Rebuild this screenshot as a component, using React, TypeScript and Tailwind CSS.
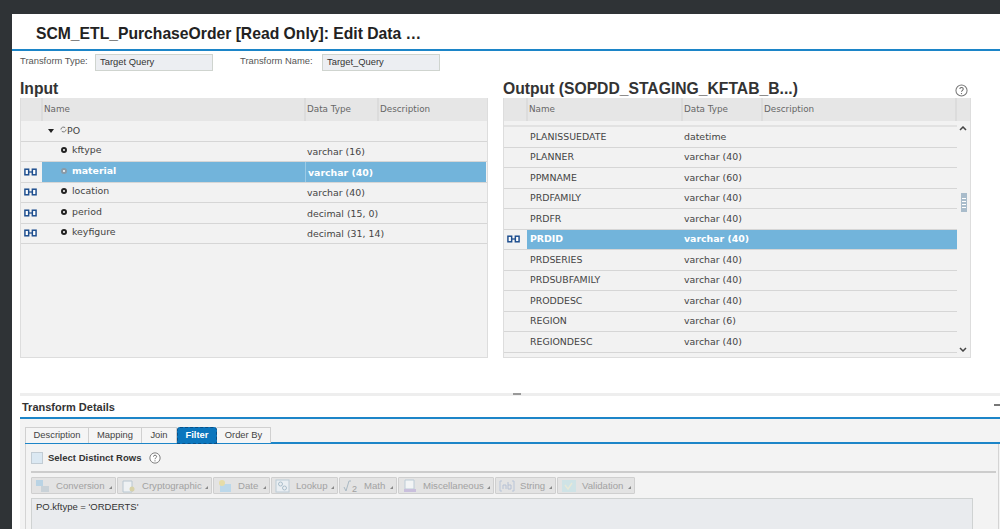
import React from "react";

const sans = "font-['Liberation_Sans',Arial,sans-serif]";
const verdana = "font-['DejaVu_Sans',Verdana,sans-serif]";

function LinkIcon() {
  return (
    <svg width="13" height="8" viewBox="0 0 14 8" className="block">
      <rect x="1" y="1" width="4" height="6" fill="#fff" stroke="#1f4f8f" strokeWidth="1.6" />
      <rect x="9" y="1" width="4" height="6" fill="#fff" stroke="#1f4f8f" strokeWidth="1.6" />
      <path d="M5 4h4" stroke="#1f4f8f" strokeWidth="1.4" />
    </svg>
  );
}

function Help({ size = 13 }: { size?: number }) {
  return (
    <svg width={size} height={size} viewBox="0 0 14 14" className="block">
      <circle cx="7" cy="7" r="6" fill="#fff" stroke="#777" strokeWidth="1.1" />
      <path d="M5.2 5.4c0-2.3 3.7-2.3 3.7 0 0 1.4-1.9 1.4-1.9 3" fill="none" stroke="#666" strokeWidth="1.1" />
      <circle cx="7" cy="10.3" r=".7" fill="#666" />
    </svg>
  );
}

function Bullet({ dim }: { dim?: boolean }) {
  return <span className={`block w-[6px] h-[6px] rounded-full border-2 bg-white ${dim ? "border-[#8a9aa6]" : "border-[#222]"}`} />;
}

function Header({ c1, c2, c3, c4, last }: { c1: number; c2: number; c3: number; c4: number; last?: boolean }) {
  const cell = "h-full flex items-center border-r-2 border-[#dcdcdc] pl-[1px]";
  return (
    <div className={`flex h-[23px] bg-[#e6e6e6] text-[8.8px] text-[#666] ${verdana}`}>
      <div className="h-full border-r-2 border-[#dcdcdc]" style={{ width: c1 }} />
      <div className={cell} style={{ width: c2 }}>Name</div>
      <div className={cell} style={{ width: c3 }}>Data Type</div>
      <div className={last ? cell : "h-full flex items-center pl-[1px]"} style={{ width: c4 }}>Description</div>
      {last && <div className="flex-1" />}
    </div>
  );
}

const inputRows = [
  { n: "kftype", t: "varchar (16)", link: false },
  { n: "material", t: "varchar (40)", link: true, sel: true },
  { n: "location", t: "varchar (40)", link: true },
  { n: "period", t: "decimal (15, 0)", link: true },
  { n: "keyfigure", t: "decimal (31, 14)", link: true },
];

const outputRows = [
  ["PLANISSUEDATE", "datetime"],
  ["PLANNER", "varchar (40)"],
  ["PPMNAME", "varchar (60)"],
  ["PRDFAMILY", "varchar (40)"],
  ["PRDFR", "varchar (40)"],
  ["PRDID", "varchar (40)"],
  ["PRDSERIES", "varchar (40)"],
  ["PRDSUBFAMILY", "varchar (40)"],
  ["PRODDESC", "varchar (40)"],
  ["REGION", "varchar (6)"],
  ["REGIONDESC", "varchar (40)"],
];

function InputTable() {
  return (
    <div className={`h-[260px] bg-[#f2f2f2] border-x border-b border-[#dddddd] ${verdana} text-[9.4px] text-[#444]`}>
      <Header c1={22} c2={263} c3={73} c4={107} />
      <div className="flex items-center h-[20.5px] border-b border-[#d6d6d6] pl-[27px] text-[#444]">
        <span className="w-0 h-0 border-x-[3px] border-x-transparent border-t-[4px] border-t-[#222] ml-0 mr-[6px]" />
        <svg width="7" height="7" viewBox="0 0 8 8" className="-mt-[3px]">
          <path d="M1 4a3 3 0 0 1 5-2M7 4a3 3 0 0 1-5 2" fill="none" stroke="#666" strokeWidth="1" />
        </svg>
        <span>PO</span>
      </div>
      {inputRows.map((r) => (
        <div key={r.n} className="flex h-[20.5px] border-b border-[#d6d6d6] pr-[1px]">
          <div className="w-[21px] flex items-center pl-[3px]">{r.link && <LinkIcon />}</div>
          <div className={`flex flex-1 ${r.sel ? "bg-[#72b4db] text-white font-bold" : ""}`}>
            <div className="w-[263px] flex items-center pl-[19px] gap-[5px] pb-[2px]">
              <Bullet dim={r.sel} />
              <span>{r.n}</span>
            </div>
            <div className={`flex-1 flex items-center pl-[2px] pt-[2px] ${r.sel ? "border-l border-[#9ccbe6]" : ""}`}>{r.t}</div>
          </div>
        </div>
      ))}
    </div>
  );
}

function OutputTable() {
  return (
    <div className={`relative h-[260px] bg-[#f2f2f2] border-x border-b border-[#dddddd] ${verdana} text-[9.4px] text-[#444]`}>
      <Header c1={24} c2={155} c3={80} c4={194} last />
      <div className="w-[453px] pt-[4px]">
        <div className="border-t-2 border-[#e2e2e2]" />
        {outputRows.map(([n, t]) => {
          const sel = n === "PRDID";
          return (
            <div key={n} className="flex h-[20.5px] border-b border-[#d6d6d6]">
              <div className="w-[23px] flex items-center pl-[3px]">{sel && <LinkIcon />}</div>
              <div className={`flex flex-1 items-center ${sel ? "bg-[#72b4db] text-white font-bold" : ""}`}>
                <div className="w-[157px] pl-[3px]">{n}</div>
                <div>{t}</div>
              </div>
            </div>
          );
        })}
      </div>
      <svg width="8" height="5" viewBox="0 0 8 5" className="absolute right-[3px] top-[28px]">
        <path d="M1 4l3-3 3 3" fill="none" stroke="#444" strokeWidth="1.5" />
      </svg>
      <div className="absolute right-[3px] top-[95px] w-[6px] h-[19px] bg-[#a9bccb] flex flex-col items-center justify-center gap-[2px]">
        <span className="block w-[4px] h-[1px] bg-white" />
        <span className="block w-[4px] h-[1px] bg-white" />
        <span className="block w-[4px] h-[1px] bg-white" />
        <span className="block w-[4px] h-[1px] bg-white" />
      </div>
      <svg width="8" height="5" viewBox="0 0 8 5" className="absolute right-[3px] top-[249px]">
        <path d="M1 1l3 3 3-3" fill="none" stroke="#444" strokeWidth="1.5" />
      </svg>
    </div>
  );
}

const toolIcons: Record<string, React.ReactNode> = {
  Conversion: (
    <svg width="16" height="14" viewBox="0 0 16 14">
      <rect x="1" y="1" width="7" height="6" fill="#b9d3e4" />
      <rect x="6" y="7" width="8" height="6" fill="#c9d2d8" />
    </svg>
  ),
  Cryptographic: (
    <svg width="16" height="14" viewBox="0 0 16 14">
      <path d="M2 2h9v11H2z" fill="#eef1f3" stroke="#b8c6d0" />
      <circle cx="11" cy="10" r="2.5" fill="#d8d2a8" />
    </svg>
  ),
  Date: (
    <svg width="16" height="14" viewBox="0 0 16 14">
      <path d="M3 5h11v8H3z" fill="#bcd8ea" />
      <circle cx="5" cy="4" r="3" fill="#e6dca8" />
    </svg>
  ),
  Lookup: (
    <svg width="16" height="14" viewBox="0 0 16 14">
      <rect x="1" y="1" width="13" height="12" fill="#e9eef2" stroke="#bccbd6" />
      <circle cx="5.5" cy="5" r="2" fill="none" stroke="#a9bdca" />
      <circle cx="9.5" cy="9" r="2" fill="none" stroke="#a9bdca" />
    </svg>
  ),
  Math: (
    <svg width="16" height="14" viewBox="0 0 16 14">
      <path d="M1 8l2 4 3-10h2" fill="none" stroke="#a9b9c4" />
      <text x="9" y="12.5" fontSize="9" fill="#a0a0a0" fontFamily="Liberation Sans">2</text>
    </svg>
  ),
  Miscellaneous: (
    <svg width="16" height="14" viewBox="0 0 16 14">
      <path d="M3 1h9v9H3z" fill="#f2f4f5" stroke="#bccbd6" />
      <rect x="2" y="10" width="12" height="3" fill="#c9bfdc" />
    </svg>
  ),
  String: (
    <svg width="16" height="14" viewBox="0 0 16 14">
      <path d="M3 2H1v10h2M13 2h2v10h-2" fill="none" stroke="#b9c5d8" />
      <path d="M4 10V6h3v4M9 3v7h3V6H9" fill="none" stroke="#b5c0d4" />
    </svg>
  ),
  Validation: (
    <svg width="16" height="14" viewBox="0 0 16 14">
      <rect x="1" y="1" width="14" height="12" fill="#cfe3e6" />
      <path d="M4 6l3 4 4-6" fill="none" stroke="#e7e9d8" strokeWidth="1.5" />
    </svg>
  ),
};

const tools: [string, number][] = [
  ["Conversion", 85],
  ["Cryptographic", 95],
  ["Date", 57],
  ["Lookup", 67],
  ["Math", 58],
  ["Miscellaneous", 96],
  ["String", 61],
  ["Validation", 78],
];

export default function App() {
  return (
    <div className={`w-[1000px] h-[529px] overflow-hidden bg-[#2f3336] flex flex-col ${sans}`}>
      <div className="h-[14px] shrink-0" />
      <div className="flex-1 min-h-0 ml-[12px] bg-white flex flex-col">
        <div className="h-[37px] shrink-0 border-b-2 border-[#1c85c8] pl-[24px] pt-[5px] flex items-center text-[15.7px] font-bold text-[#222]">
          SCM_ETL_PurchaseOrder [Read Only]: Edit Data …
        </div>

        <div className="flex items-start h-[21px] shrink-0 pl-[8px] text-[9.4px] text-[#555]">
          <span className="mt-[3px] w-[75px]">Transform Type:</span>
          <div className="w-[118px] h-[17px] mt-[3px] bg-[#eceef2] border border-[#cfd4cf] text-[#333] pl-[4px] flex items-center">Target Query</div>
          <span className="mt-[3px] ml-[27px] w-[82px]">Transform Name:</span>
          <div className="w-[118px] h-[17px] mt-[3px] bg-[#eceef2] border border-[#cfd4cf] text-[#333] pl-[4px] flex items-center">Target_Query</div>
        </div>

        <div className="flex shrink-0 pl-[8px] mt-[6px]">
          <div className="w-[468px]">
            <div className="h-[20px] flex items-end text-[15.7px] leading-[18px] font-bold text-[#333]">Input</div>
            <InputTable />
          </div>
          <div className="w-[468px] ml-[15px]">
            <div className="h-[20px] flex items-end justify-between text-[15.7px] leading-[18px] font-bold text-[#333] pr-[3px]">
              <span>Output (SOPDD_STAGING_KFTAB_B...)</span>
              <span className="pb-[1px]"><Help /></span>
            </div>
            <OutputTable />
          </div>
        </div>

        <div className="mt-[35px] ml-[8px] h-[3px] shrink-0 bg-[#eeeeee] flex justify-center">
          <span className="block w-[8px] h-[2px] bg-[#999] ml-[14px]" />
        </div>

        <div className="relative ml-[8px] h-[23px] shrink-0 border-b-2 border-[#1c85c8] flex items-end pb-[2px] pl-[2px] text-[11px] font-bold text-[#333]">
          Transform Details
          <span className="absolute right-0 top-[8px] w-[6px] h-[2px] bg-[#777]" />
        </div>

        <div className="flex-1 min-h-0 ml-[8px] bg-[#f3f3f3] flex flex-col">
          <div className="mt-[8px] h-[17px] shrink-0 ml-[5px] border-b-2 border-[#1c85c8] flex text-[9.4px] text-[#444] pl-0">
            {[
              ["Description", 64],
              ["Mapping", 53],
              ["Join", 35],
            ].map(([t, w]) => (
              <div key={t as string} style={{ width: w as number }} className="h-[16px] border-t border-r border-[#d0d0d0] bg-[#f5f5f5] first:border-l flex items-center justify-center">
                {t}
              </div>
            ))}
            <div className="w-[40px] h-[17px] rounded-t-[3px] bg-[#0b76bd] border border-dashed border-[#0a4f86] text-white font-bold flex items-center justify-center">Filter</div>
            <div className="w-[54px] h-[16px] border-t border-r border-[#d0d0d0] bg-[#f5f5f5] flex items-center justify-center">Order By</div>
          </div>

          <div className="flex-1 min-h-0 ml-[5px] mr-[1px] border-x border-[#d4d4d4] pl-[5px] pr-[2px] flex flex-col">
            <div className="h-[27px] shrink-0 pt-[1px] flex items-center text-[9.5px] font-bold text-[#333]">
              <span className="w-[12px] h-[12px] bg-[#dbe8f2] border border-[#c2ccd4] mr-[5px]" />
              Select Distinct Rows
              <span className="ml-[8px]"><Help size={12} /></span>
            </div>
            <div className="h-[2px] shrink-0 bg-[#cccccc]" />
            <div className="flex mt-[4px] h-[17px] shrink-0">
              {tools.map(([t, w]) => (
                <div key={t} style={{ width: w }} className="relative h-[17px] mr-[1px] pt-[1px] bg-[#e3e3e3] border border-[#cfcfcf] rounded-[1px] flex items-center text-[9.6px] text-[#a2a2a2] pl-[3px]">
                  <span className="shrink-0 block w-[21px]">{toolIcons[t]}</span>
                  {t}
                  <span className="absolute right-[3px] bottom-[4px] w-0 h-0 border-l-[3px] border-l-transparent border-b-[3px] border-b-[#888]" />
                </div>
              ))}
            </div>
            <div className="flex-1 mt-[4px] mr-[23px] bg-[#e9ebee] border-t border-x border-[#cfd2d2] pl-[4px] pt-[1px] text-[9.5px] text-[#333]">
              PO.kftype = 'ORDERTS'
            </div>
          </div>
        </div>
      </div>
    </div>
  );
}
